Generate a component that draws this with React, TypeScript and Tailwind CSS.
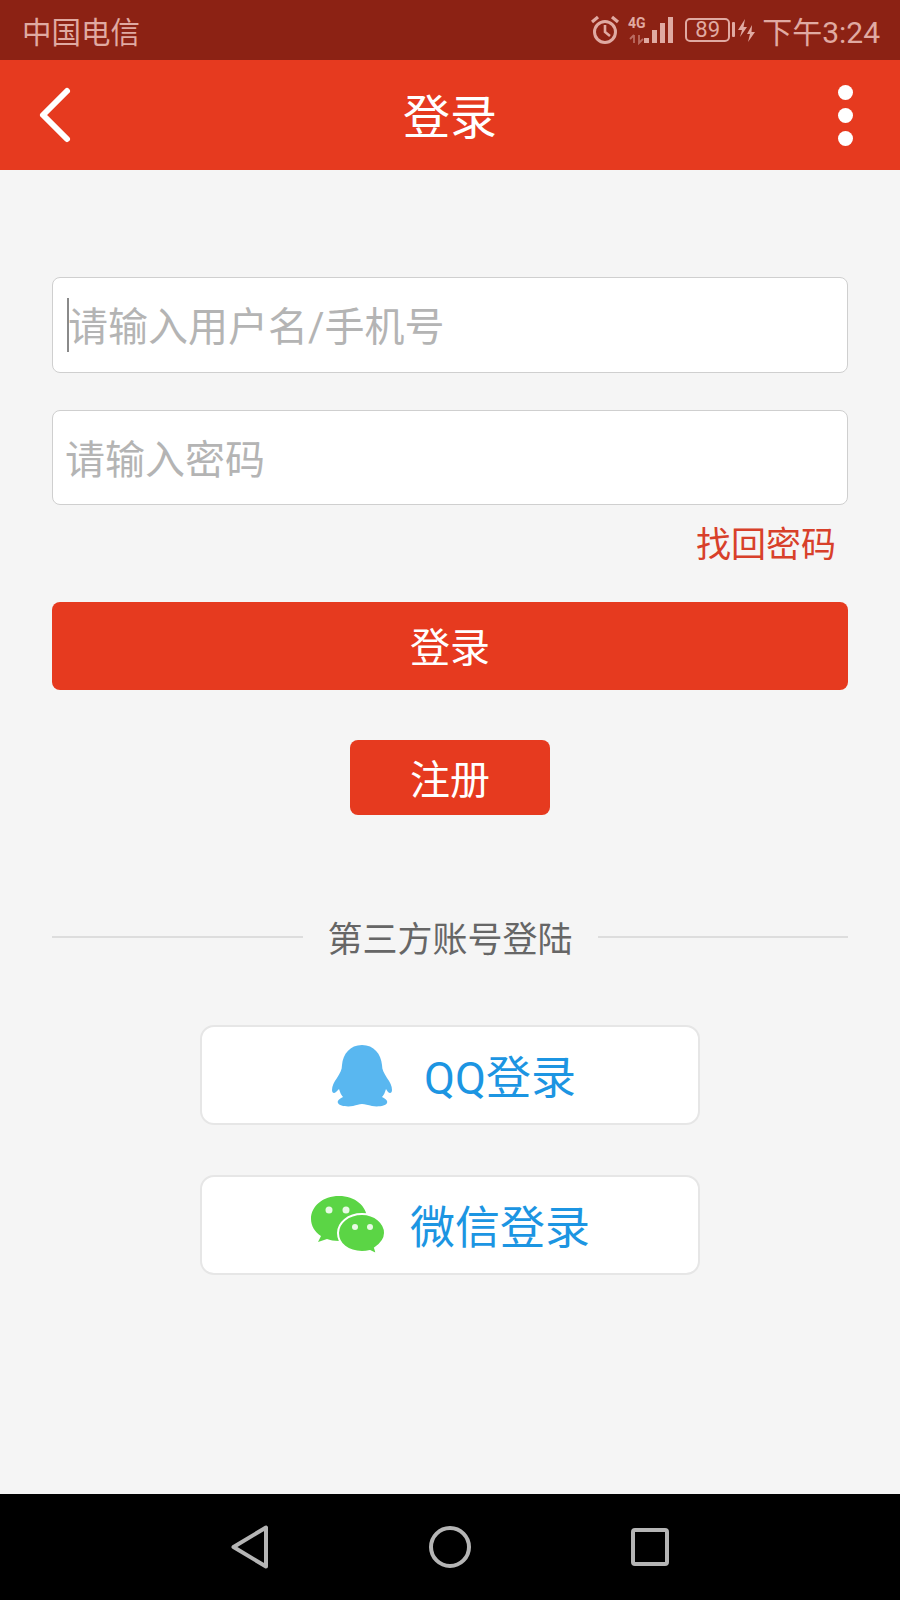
const FONT = "font-['Roboto','Noto_Sans_CJK_SC',sans-serif]";

function StatusIcons() {
  return (
    <svg width="86" height="34" viewBox="0 0 86 34" fill="none" className="text-[#e0aaa2]">
      {/* alarm clock */}
      <circle cx="14" cy="19" r="10.5" stroke="currentColor" strokeWidth="3" />
      <path d="M14 12V19L19 23" stroke="currentColor" strokeWidth="2.6" />
      <path d="M1 9L7 4M27 9L21 4" stroke="currentColor" strokeWidth="3.2" />
      {/* signal */}
      <rect x="53" y="25" width="5" height="5" fill="currentColor" />
      <rect x="61" y="17" width="5" height="13" fill="currentColor" />
      <rect x="69" y="10" width="5" height="20" fill="currentColor" />
      <rect x="77" y="4" width="5" height="26" fill="currentColor" />
      <text x="37" y="15" fontSize="14" fontWeight="700" fill="currentColor" fontFamily="Roboto">4G</text>
      <path d="M43 22V30M39 26L43 22M48 22V30L52 26" stroke="currentColor" strokeWidth="1.8" opacity="0.55" />
    </svg>
  );
}

function Bolt() {
  return (
    <svg width="24" height="28" viewBox="0 0 24 28" fill="#e0aaa2">
      <rect x="0" y="6" width="3" height="15" rx="1" />
      <path d="M13 3L6 14H10L8 21L15 11H11.5Z" />
      <path d="M20 9L15 18H18L16 26L23 16H19.5Z" />
    </svg>
  );
}

function QQIcon() {
  return (
    <svg width="60" height="62" viewBox="0 0 60 62" fill="#59b7f0" className="mt-[2px]">
      <path d="M30 0C18 0 11 9 10 20C10 25 8 28 5 33C2 37 0 41 0 45C0 48 2 49 4 47L7 44C8 47 9 50 11 52C7 54 5 56 6 58C7 61 15 62 21 61C25 60 27 59 30 59C33 59 36 60 40 61C46 62 54 61 55 58C56 56 54 54 50 52C52 50 53 47 54 44L56 47C58 49 60 48 60 45C60 41 58 37 55 33C52 28 50 25 50 20C49 9 42 0 30 0Z" />
    </svg>
  );
}

function WechatIcon() {
  return (
    <svg width="76" height="60" viewBox="0 0 76 60">
      <path d="M29 1C13 1 1 11 1 24C1 31 5 37 11 41L8 47L17 44C20 45 24 46 29 46C45 46 57 36 57 24C57 11 45 1 29 1Z" fill="#5bd545" />
      <circle cx="19" cy="15" r="3.5" fill="#e8fae4" />
      <circle cx="36" cy="15" r="3.5" fill="#e8fae4" />
      <path d="M52 19C38 19 28 28 28 38C28 49 38 57 52 57C55 57 58 56.5 60 56L67 59.5L65 53C71 49 75 44 75 38C75 28 65 19 52 19Z" fill="#5bd545" stroke="#ffffff" strokeWidth="2" />
      <circle cx="45" cy="32" r="3" fill="#e8fae4" />
      <circle cx="60" cy="32" r="3" fill="#e8fae4" />
    </svg>
  );
}

export default function App() {
  return (
    <div className={`flex flex-col w-[900px] h-[1600px] bg-[#f5f5f5] ${FONT}`}>
      <div className="flex items-center justify-between h-[60px] pl-[22px] pr-[20px] bg-[#8c2214] text-[#e0aaa2]">
        <span className="pt-[6px] text-[29.5px] leading-[40px]">中国电信</span>
        <div className="flex items-center">
          <StatusIcons />
          <div className="flex items-center justify-center w-[45px] h-[24px] ml-[8px] mr-[2px] border-2 border-[#e0aaa2] rounded-[5px] text-[22px] leading-none">
            89
          </div>
          <Bolt />
          <span className="ml-[6px] pt-[6px] text-[30px] leading-[40px]">下午3:24</span>
        </div>
      </div>

      <header className="flex items-center justify-between h-[110px] pl-[38px] pr-[47px] bg-[#e63a1f] text-white">
        <div className="w-[109px]">
          <svg width="34" height="58" viewBox="0 0 34 58" fill="none" stroke="#ffffff" strokeWidth="6" strokeLinecap="round" strokeLinejoin="round">
            <path d="M29 5L5 29L29 53" />
          </svg>
        </div>
        <span className="pt-[6px] text-[47px] leading-[60px]">登录</span>
        <div className="flex flex-col items-end gap-[8px] w-[100px]">
          <span className="w-[15px] h-[15px] rounded-full bg-white" />
          <span className="w-[15px] h-[15px] rounded-full bg-white" />
          <span className="w-[15px] h-[15px] rounded-full bg-white" />
        </div>
      </header>

      <main className="flex flex-col flex-1 px-[52px] pt-[107px]">
        <div className="flex items-center h-[96px] pl-[14px] bg-white border border-[#cfcfcf] rounded-[8px] text-[40px] text-[#b4b4b4]">
          <span className="w-[2px] h-[54px] -mr-[2px] bg-[#8a8a8a]" />
          <span className="ml-[1px] pt-[6px] leading-[50px]">请输入用户名/手机号</span>
        </div>
        <div className="flex items-center h-[95px] mt-[37px] pl-[12px] bg-white border border-[#cfcfcf] rounded-[8px] text-[40px] text-[#b4b4b4]">
          <span className="pt-[6px] leading-[50px]">请输入密码</span>
        </div>
        <div className="mt-[21px] pr-[12px] text-right text-[35px] leading-[40px] text-[#d8402a]">找回密码</div>

        <button className="h-[88px] mt-[36px] pt-[6px] rounded-[8px] bg-[#e63a1f] text-[40px] text-white">登录</button>
        <button className="self-center w-[200px] h-[75px] mt-[50px] pt-[6px] rounded-[8px] bg-[#e63a1f] text-[40px] text-white">注册</button>

        <div className="flex items-center gap-[25px] mt-[96px] text-[35px] leading-[44px] text-[#666666]">
          <span className="flex-1 h-[2px] bg-[#dddddd]" />
          <span className="pt-[8px]">第三方账号登陆</span>
          <span className="flex-1 h-[2px] bg-[#dddddd]" />
        </div>

        <button className="flex items-center justify-center gap-[32px] self-center w-[500px] h-[100px] mt-[62px] pl-[8px] bg-white border-2 border-[#e6e6e6] rounded-[14px] text-[45px] text-[#1c95e2]">
          <QQIcon />
          <span className="pt-[8px]">QQ登录</span>
        </button>
        <button className="flex items-center justify-center gap-[24px] self-center w-[500px] h-[100px] mt-[50px] bg-white border-2 border-[#e6e6e6] rounded-[14px] text-[45px] text-[#1c95e2]">
          <WechatIcon />
          <span className="pt-[8px]">微信登录</span>
        </button>
      </main>

      <nav className="flex items-center justify-center gap-[160px] h-[106px] bg-black">
        <svg width="38" height="44" viewBox="0 0 38 44" fill="none" stroke="#b5b5b5" strokeWidth="4" strokeLinejoin="round">
          <path d="M2.5 22L35 2.5V41.5Z" />
        </svg>
        <svg width="42" height="42" viewBox="0 0 42 42" fill="none" stroke="#b5b5b5" strokeWidth="4">
          <circle cx="21" cy="21" r="19" />
        </svg>
        <svg width="38" height="38" viewBox="0 0 38 38" fill="none" stroke="#b5b5b5" strokeWidth="4" strokeLinejoin="round">
          <rect x="2" y="2" width="34" height="34" rx="2" />
        </svg>
      </nav>
    </div>
  );
}
